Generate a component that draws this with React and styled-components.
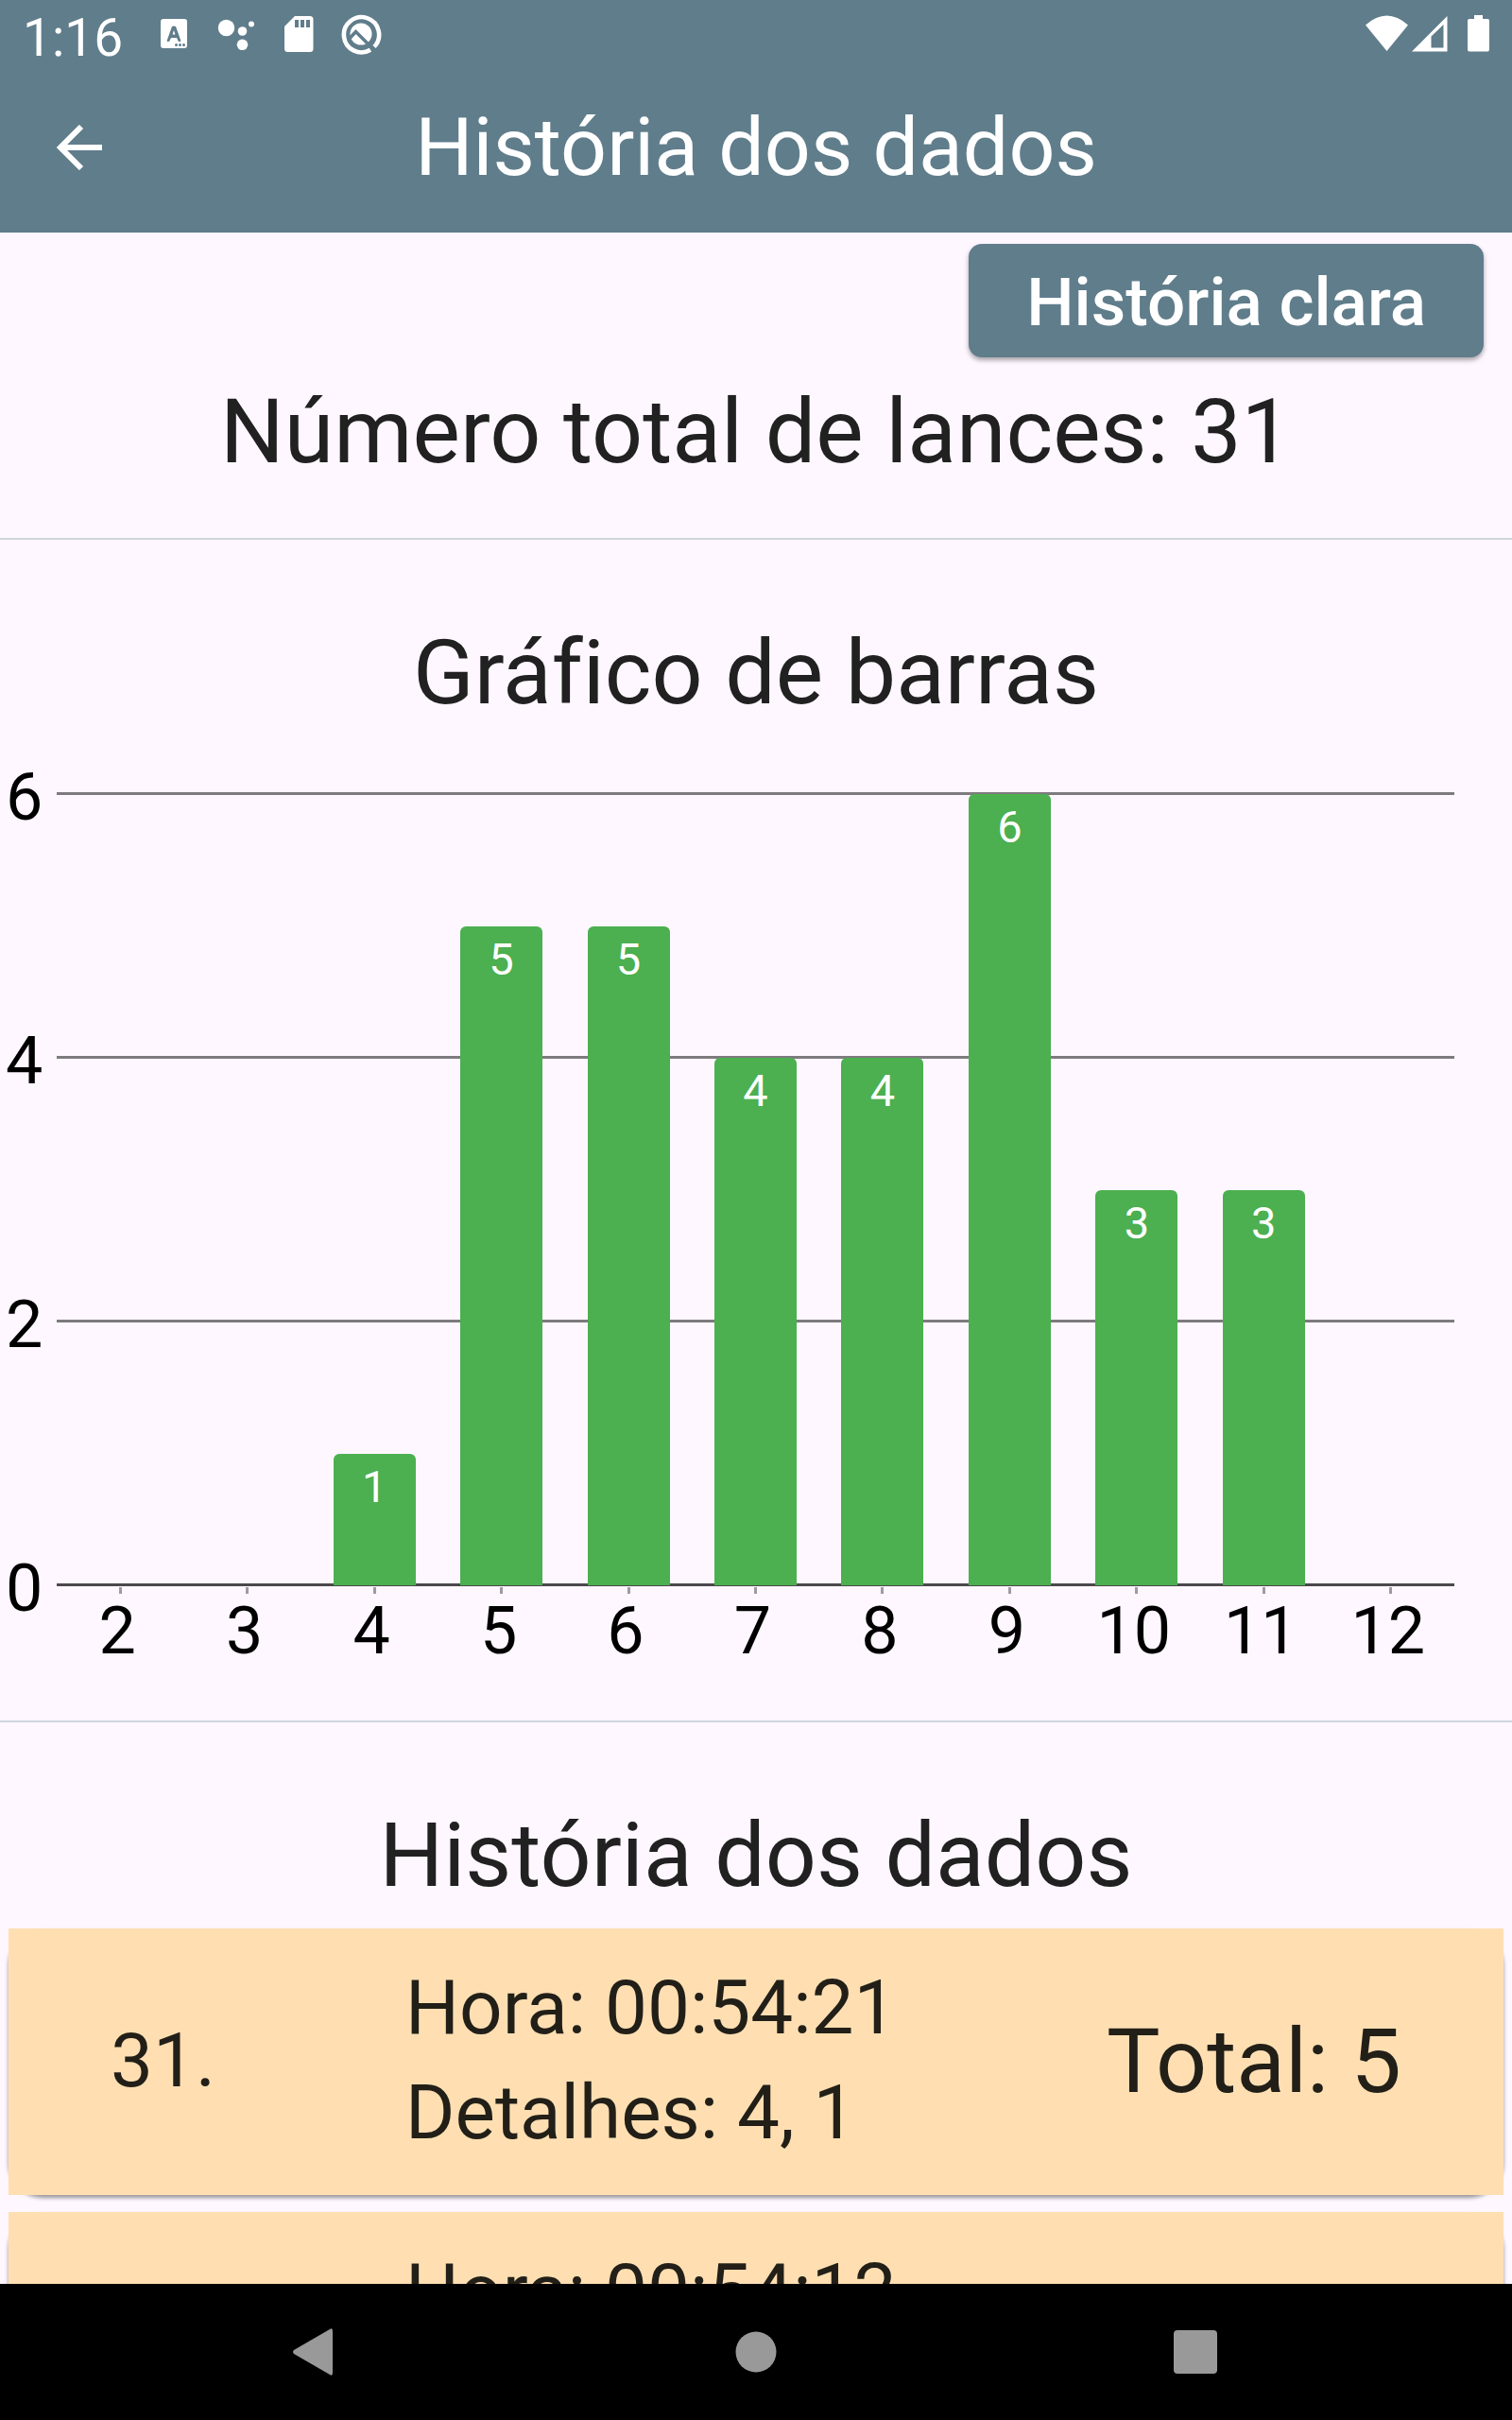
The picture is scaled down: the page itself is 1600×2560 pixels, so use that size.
import React from "react";
import styled, { createGlobalStyle } from "styled-components";

const Global = createGlobalStyle`
  * { box-sizing: border-box; }
  body { margin: 0; background: #fef7ff; }
`;

const slate = "#607d8b";

const Screen = styled.div`
  display: flex;
  flex-direction: column;
  height: 100vh;
  overflow: hidden;
  background: #fef7ff;
  color: #212121;
  font-family: Roboto, "Liberation Sans", sans-serif;
  font-variant-ligatures: none;
`;

const StatusBar = styled.div`
  flex: none;
  display: flex;
  align-items: center;
  justify-content: space-between;
  height: 72px;
  padding: 0 24px;
  background: ${slate};
  color: #fff;
`;

const StatusGroup = styled.div`
  display: flex;
  align-items: center;
`;

const Clock = styled.time`
  margin-right: 38px;
  padding-top: 8px;
  font-size: 55px;
  line-height: 64px;
`;

const AppBar = styled.header`
  flex: none;
  display: grid;
  grid-template-columns: 168px 1fr 168px;
  align-items: center;
  height: 174px;
  padding-bottom: 6px;
  background: ${slate};
  color: #fff;
`;

const BackButton = styled.button`
  display: flex;
  align-items: center;
  justify-content: center;
  width: 168px;
  height: 168px;
  padding: 0;
  border: 0;
  background: none;
  color: inherit;
`;

const Title = styled.h1`
  margin: 0;
  font-size: 86px;
  font-weight: 400;
  line-height: 108px;
  text-align: center;
`;

const Content = styled.main`
  flex: 1;
  min-height: 0;
  overflow: hidden;
`;

const Actions = styled.div`
  display: flex;
  justify-content: flex-end;
  padding: 12px 30px 0;
`;

const ClearButton = styled.button`
  height: 120px;
  padding: 4px 61px 0;
  border: 0;
  border-radius: 14px;
  background: ${slate};
  box-shadow: 0 3px 5px rgba(0, 0, 0, 0.35);
  color: #fff;
  font: 500 71px/84px Roboto, "Liberation Sans", sans-serif;
`;

const Heading = styled.h2`
  margin: 0;
  padding: ${(p) => p.$top}px 0 ${(p) => p.$bottom}px;
  font-size: 95px;
  font-weight: 400;
  line-height: 112px;
  text-align: center;
`;

const Rule = styled.hr`
  height: 2px;
  margin: 0;
  border: 0;
  background: #cfd6dd;
`;

const Chart = styled.figure`
  display: grid;
  grid-template-columns: 60px 1fr;
  margin: 0 61px 53px 0;
  color: #000;
  font-size: 70px;
  line-height: 84px;
`;

const ValueAxis = styled.div`
  display: flex;
  flex-direction: column;
  justify-content: space-between;
  height: 921px;
  margin: -39px 0 -45px;
  padding-left: 6px;
`;

const Plot = styled.div`
  position: relative;
  height: 837px;
`;

const GridLine = styled.div`
  position: absolute;
  left: 0;
  right: 0;
  height: 3px;
  margin-bottom: -1px;
  background: ${(p) => (p.$axis ? "#4c494d" : "#7e7b7f")};
`;

const Columns = styled.div`
  position: relative;
  display: grid;
  grid-template-columns: repeat(11, 1fr);
  justify-items: center;
  align-items: end;
  height: 100%;
`;

const Bar = styled.div`
  width: 87px;
  padding-top: 7px;
  border-radius: 6px 6px 0 0;
  background: #4caf50;
  color: #fff;
  font-size: 47px;
  line-height: 56px;
  text-align: center;
`;

const CategoryAxis = styled.div`
  grid-column: 2;
  display: grid;
  grid-template-columns: repeat(11, 1fr);
  justify-items: center;
`;

const Category = styled.div`
  display: flex;
  flex-direction: column;
  align-items: center;

  &::before {
    content: "";
    width: 3px;
    height: 7px;
    margin: 2px 0 -3px;
    background: #9e9b9f;
  }
`;

const CategoryLabel = styled.span`
  padding-right: 6px;
  margin-left: 0;
`;

const ListArea = styled.div`
  position: relative;
  z-index: 0;
`;

const List = styled.ul`
  display: flex;
  flex-direction: column;
  gap: 18px;
  margin: 0;
  padding: 0 9px;
  list-style: none;
`;

const Card = styled.li`
  position: relative;
  display: grid;
  grid-template-columns: 312px 1fr auto;
  align-items: center;
  height: 282px;
  padding: 0 108px 2px;
  background: #ffdfb2;
  color: #221f18;
  font-size: 80px;
  line-height: 111px;

  &::before {
    content: "";
    position: absolute;
    inset: 0;
    z-index: -1;
    border-radius: 36px;
    box-shadow: 0 3px 4px rgba(0, 0, 0, 0.4);
  }
`;

const Total = styled.strong`
  font-size: 95px;
  font-weight: 400;
`;

const NavBar = styled.nav`
  flex: none;
  display: grid;
  grid-template-columns: repeat(3, 1fr);
  height: 144px;
  padding: 0 102px;
  background: #000;
`;

const NavButton = styled.button`
  display: flex;
  align-items: center;
  justify-content: center;
  padding: 0;
  border: 0;
  background: none;
  color: #999;
`;

const rolls = [
  { total: 2, count: 0 }, { total: 3, count: 0 }, { total: 4, count: 1 },
  { total: 5, count: 5 }, { total: 6, count: 5 }, { total: 7, count: 4 },
  { total: 8, count: 4 }, { total: 9, count: 6 }, { total: 10, count: 3 },
  { total: 11, count: 3 }, { total: 12, count: 0 },
];
const ticks = [6, 4, 2, 0];
const maxCount = 6;

const history = [
  { n: 31, time: "00:54:21", dice: "4, 1", total: 5 },
  { n: 30, time: "00:54:12", dice: "6, 3", total: 9 },
];

const StatusIcons = () => (
  <svg width="236" height="46" viewBox="168 13 236 46" fill="#fff" aria-hidden="true">
    <path fillRule="evenodd" d="M173 20h22q3 0 3 3v25q0 3-3 3h-22q-3 0-3-3v-25q0-3 3-3zM182 28l-5 14q-1 2 1 2t2-2l1-2h6l1 2q0 2 2 2t1-2l-5-14q-2-1-4 0zM184 32l1.500 4.500h-3z" />
    <g fill={slate}><circle cx="186.500" cy="47.500" r="1.500" /><circle cx="190.500" cy="47.500" r="1.500" /><circle cx="194.500" cy="47.500" r="1.500" /></g>
    <circle cx="239.500" cy="29.500" r="8.700" />
    <circle cx="256.500" cy="33" r="4.800" />
    <circle cx="266" cy="25.500" r="3" />
    <circle cx="256.500" cy="47.300" r="5.800" />
    <path d="M312 17h16q3.500 0 3.500 3.500v31q0 3.500-3.500 3.500h-23.500q-3.500 0-3.500-3.500v-23.500z" />
    <path fill={slate} d="M312 21h4v8h-4zM318 21h4v8h-4zM324 21h4v8h-4z" />
    <path fill="none" stroke="#fff" strokeWidth="4.600" d="M396 49.500a18.600 18.600 0 1 0-4 3.200" />
    <circle cx="382" cy="36" r="11.500" />
    <path fill="none" stroke={slate} strokeWidth="3.600" d="M370.500 40l6-6.500 20 20" />
  </svg>
);

const SignalIcons = () => (
  <svg width="132" height="42" viewBox="1444 15 132 42" fill="#fff" aria-hidden="true">
    <path d="M1445 26.500q22.500-20 45 0l-22.500 27.500z" />
    <path fillRule="evenodd" d="M1494 54.500l37.500-37.500v37.500zM1514.500 38.500v12h13v-24.500z" />
    <path d="M1560 16h9v4h5q2 0 2 2v30.500q0 2-2 2h-19q-2 0-2-2v-30.500q0-2 2-2h5z" />
  </svg>
);

export default function App() {
  return (
    <Screen>
      <Global />
      <StatusBar>
        <StatusGroup>
          <Clock>1:16</Clock>
          <StatusIcons />
        </StatusGroup>
        <SignalIcons />
      </StatusBar>
      <AppBar>
        <BackButton aria-label="Voltar">
          <svg width="48" height="48" viewBox="0 0 48 48" fill="none" stroke="currentColor" strokeWidth="6" aria-hidden="true">
            <path d="M48 24H6M26 2L4 24l22 22" />
          </svg>
        </BackButton>
        <Title>História dos dados</Title>
      </AppBar>
      <Content>
        <Actions>
          <ClearButton>História clara</ClearButton>
        </Actions>
        <Heading $top={23} $bottom={56}>Número total de lances: 31</Heading>
        <Rule />
        <Heading $top={85} $bottom={72}>Gráfico de barras</Heading>
        <Chart>
          <ValueAxis>
            {ticks.map((t) => <span key={t}>{t}</span>)}
          </ValueAxis>
          <Plot>
            {ticks.map((t) => (
              <GridLine key={t} $axis={t === 0} style={{ bottom: `${(t / maxCount) * 100}%` }} />
            ))}
            <Columns>
              {rolls.map((r) =>
                r.count ? (
                  <Bar key={r.total} style={{ height: `${(r.count / maxCount) * 100}%` }}>{r.count}</Bar>
                ) : (
                  <span key={r.total} />
                )
              )}
            </Columns>
          </Plot>
          <CategoryAxis>
            {rolls.map((r) => (
              <Category key={r.total}>
                <CategoryLabel>{r.total}</CategoryLabel>
              </Category>
            ))}
          </CategoryAxis>
        </Chart>
        <Rule />
        <Heading $top={85} $bottom={21}>História dos dados</Heading>
        <ListArea>
          <List>
            {history.map((h) => (
              <Card key={h.n}>
                <span>{h.n}.</span>
                <div>
                  <div>Hora: {h.time}</div>
                  <div>Detalhes: {h.dice}</div>
                </div>
                <Total>Total: {h.total}</Total>
              </Card>
            ))}
          </List>
        </ListArea>
      </Content>
      <NavBar aria-label="Sistema">
        <NavButton aria-label="Voltar">
          <svg width="50" height="50" viewBox="3 0 50 50" overflow="visible" fill="currentColor" aria-hidden="true">
            <path d="M42 1q3-2 3 2v44q0 4-3 2L4 27q-2-2 0-4z" />
          </svg>
        </NavButton>
        <NavButton aria-label="Início">
          <svg width="44" height="44" viewBox="0 0 44 44" fill="currentColor" aria-hidden="true">
            <circle cx="22" cy="22" r="21.500" />
          </svg>
        </NavButton>
        <NavButton aria-label="Recentes">
          <svg width="46" height="46" viewBox="0 0 46 46" fill="currentColor" aria-hidden="true">
            <rect width="46" height="46" rx="4" />
          </svg>
        </NavButton>
      </NavBar>
    </Screen>
  );
}
